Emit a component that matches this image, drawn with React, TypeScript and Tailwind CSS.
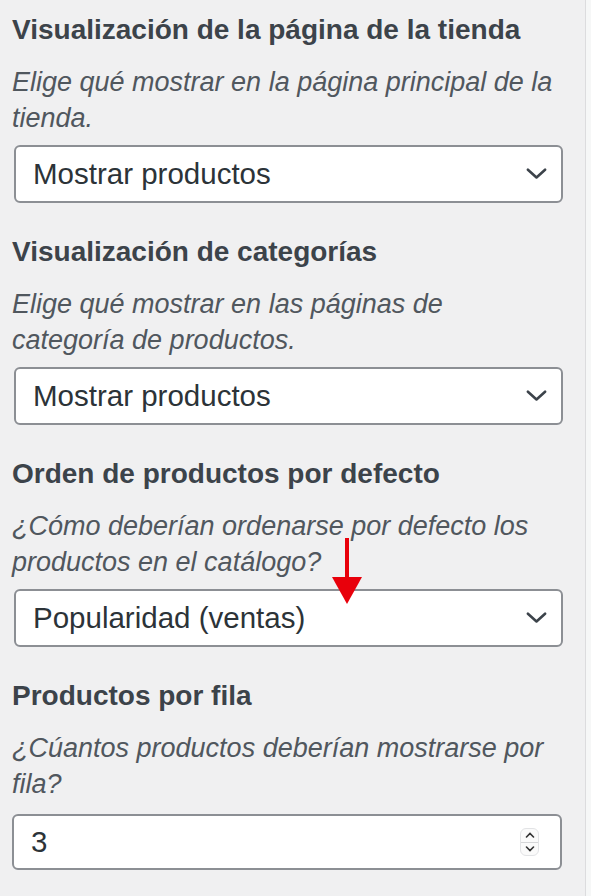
import type { ReactNode } from "react";

const FONT = { fontFamily: '"Liberation Sans", Arial, sans-serif' };

function Chevron() {
  return (
    <svg
      viewBox="0 0 24 14"
      className="pointer-events-none absolute right-[16px] top-1/2 h-[12px] w-[21px] -translate-y-1/2"
      aria-hidden
    >
      <path d="M2 2 L12 11 L22 2" fill="none" stroke="#3c434a" strokeWidth="3" strokeLinecap="round" strokeLinejoin="round" />
    </svg>
  );
}

function Spinner() {
  return (
    <div
      className="pointer-events-none absolute right-[23px] top-1/2 flex h-[28px] w-[19px] -translate-y-1/2 flex-col overflow-hidden rounded-[6px] border border-[#e2e3e5] bg-[#fafafa]"
      aria-hidden
    >
      <div className="flex flex-1 items-center justify-center border-b border-[#d5d6d8]">
        <svg viewBox="0 0 10 6" className="h-[6px] w-[10px]">
          <path d="M1.5 5 L5 1.5 L8.5 5" fill="none" stroke="#333" strokeWidth="1.6" strokeLinecap="round" />
        </svg>
      </div>
      <div className="flex flex-1 items-center justify-center">
        <svg viewBox="0 0 10 6" className="h-[6px] w-[10px]">
          <path d="M1.5 1 L5 4.5 L8.5 1" fill="none" stroke="#333" strokeWidth="1.6" strokeLinecap="round" />
        </svg>
      </div>
    </div>
  );
}

type SectionProps = {
  title: string;
  description: ReactNode;
  children: ReactNode;
};

function Section({ title, description, children }: SectionProps) {
  return (
    <section className="flex flex-col">
      <h2 className="text-[28px] font-bold leading-[36px] text-[#3c434a]">{title}</h2>
      <p className="mt-[16px] w-[546px] text-[27px] italic leading-[36px] text-[#50575e]">{description}</p>
      {children}
    </section>
  );
}

function SelectBox({ value, annotate }: { value: string; annotate?: boolean }) {
  return (
    <div className="relative ml-[2px] mt-[9px] w-[549px]">
      <select
        defaultValue={value}
        className="h-[58px] w-full appearance-none rounded-[6px] border-2 border-[#8c8f94] bg-white pl-[17px] text-[29.5px] text-[#2c3338] outline-none"
        style={FONT}
      >
        <option>{value}</option>
      </select>
      <Chevron />
      {annotate && (
        // red annotation arrow pointing at the select
        <svg className="pointer-events-none absolute left-[318px] top-[-51px] h-[68px] w-[32px]" viewBox="0 0 32 68" aria-hidden>
          <rect x="13" y="0" width="4" height="42" fill="#e8000b" />
          <polygon points="0,39 30,39 15,66" fill="#e8000b" />
        </svg>
      )}
    </div>
  );
}

export default function App() {
  return (
    <div className="flex min-h-[896px] w-full bg-[#f6f7f7]" style={FONT}>
      <main className="flex w-[586px] shrink-0 flex-col gap-[31px] border-r border-[#dcdcde] bg-[#f0f0f1] pb-[28px] pl-[12px] pt-[12px]">
        <Section title="Visualización de la página de la tienda" description="Elige qué mostrar en la página principal de la tienda.">
          <SelectBox value="Mostrar productos" />
        </Section>

        <Section title="Visualización de categorías" description="Elige qué mostrar en las páginas de categoría de productos.">
          <SelectBox value="Mostrar productos" />
        </Section>

        <Section
          title="Orden de productos por defecto"
          description="¿Cómo deberían ordenarse por defecto los productos en el catálogo?"
        >
          <SelectBox value="Popularidad (ventas)" annotate />
        </Section>

        <Section title="Productos por fila" description="¿Cúantos productos deberían mostrarse por fila?">
          <div className="relative mt-[12px] w-[550px]">
            <input
              type="text"
              readOnly
              value="3"
              className="h-[56px] w-full rounded-[6px] border-2 border-[#8c8f94] bg-white pl-[17px] text-[29.5px] text-[#2c3338] outline-none"
              style={FONT}
            />
            <Spinner />
          </div>
        </Section>
      </main>
    </div>
  );
}
